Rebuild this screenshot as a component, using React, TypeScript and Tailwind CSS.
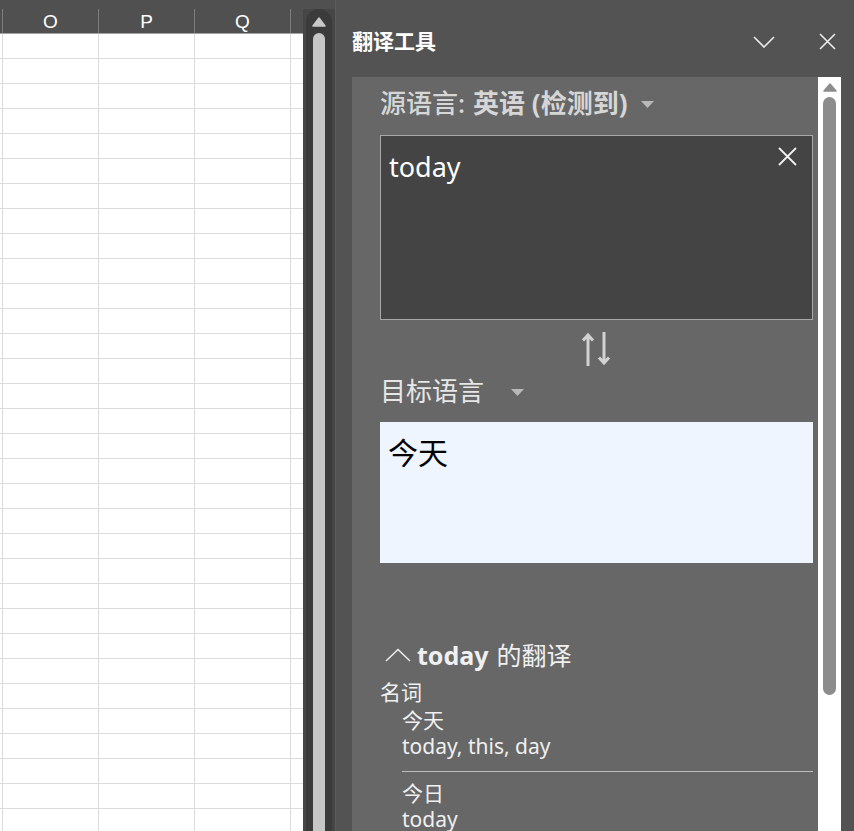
import React from 'react'

const ROWS = Array.from({ length: 32 })
const CJK = { fontFamily: '"Noto Sans", "Noto Sans CJK SC", sans-serif' }

function SheetGrid() {
  return (
    <div className="w-[303px] h-full flex flex-col bg-white overflow-hidden">
      <div className="h-[9px] bg-[#505050] shrink-0" />
      <div className="flex h-[25px] shrink-0 bg-[#505050] border-b border-[#a3a3a3] text-white text-[19px] leading-[25px]" style={{ fontFamily: '"Liberation Sans", Arial, sans-serif' }}>
        <div className="w-[3px] border-r border-[#7d7d7d]" />
        <div className="w-[96px] border-r border-[#7d7d7d] text-center">O</div>
        <div className="w-[96px] border-r border-[#7d7d7d] text-center">P</div>
        <div className="w-[96px] border-r border-[#7d7d7d] text-center">Q</div>
        <div className="flex-1" />
      </div>
      {ROWS.map((_, i) => (
        <div key={i} className="flex h-[25px] border-b border-[#dcdcdc] shrink-0">
          <div className="w-[3px] border-r border-[#dcdcdc]" />
          <div className="w-[96px] border-r border-[#dcdcdc]" />
          <div className="w-[96px] border-r border-[#dcdcdc]" />
          <div className="w-[96px] border-r border-[#dcdcdc]" />
          <div className="flex-1" />
        </div>
      ))}
    </div>
  )
}

function SheetScroll() {
  return (
    <div className="w-[32px] h-full bg-[#464646] flex pt-[9px] pl-[3px] pr-[3px]" style={{ backgroundImage: 'linear-gradient(#505050 0 9px, transparent 9px)' }}>
      <div className="w-[26px] h-full rounded-t-full bg-[#3b3b3b] flex flex-col items-center pt-[8px]">
        <svg width="14" height="10" viewBox="0 0 14 10">
          <path d="M7 1 L13 9 L1 9 Z" fill="#c8c8c8" stroke="#c8c8c8" strokeWidth="1.5" strokeLinejoin="round" />
        </svg>
        <div className="mt-[6px] w-[12px] flex-1 rounded-t-full bg-[#c6c6c6]" />
      </div>
    </div>
  )
}

function Caret({ color = '#b9b9b9' }: { color?: string }) {
  return (
    <svg width="13" height="7" viewBox="0 0 13 7">
      <path d="M0 0 L13 0 L6.5 7 Z" fill={color} />
    </svg>
  )
}

export default function App() {
  return (
    <div className="w-[854px] h-[831px] overflow-hidden flex bg-[#535353]" style={CJK}>
      <SheetGrid />
      <SheetScroll />

      {/* translator pane */}
      <div className="flex-1 h-full flex flex-col border-l border-[#5c5c5c] pl-[16px]">
        <div className="h-[77px] flex items-center pt-[6px] pr-[18px] shrink-0">
          <span className="text-[21px] font-bold text-white leading-none">翻译工具</span>
          <svg className="ml-auto" width="22" height="12" viewBox="0 0 22 12">
            <path d="M1 1 L11 11 L21 1" fill="none" stroke="#ececec" strokeWidth="1.6" />
          </svg>
          <svg className="ml-[44px]" width="17" height="17" viewBox="0 0 17 17">
            <path d="M1 1 L16 16 M16 1 L1 16" stroke="#ececec" strokeWidth="1.6" />
          </svg>
        </div>

        <div className="flex-1 flex min-h-0 pr-[13px]">
          <div className="flex-1 bg-[#676767] pl-[28px] pr-[5px] pt-[10px]">
            <div className="h-[32px] flex items-center text-[26px] leading-[32px] text-[#d6d6d6]">
              <span className="font-medium">源语言:</span>
              <span className="font-bold ml-[8px]">英语 (检测到)</span>
              <span className="ml-[14px] mt-[2px]"><Caret /></span>
            </div>

            <div className="mt-[16px] h-[185px] bg-[#444444] border border-[#a8a8a8] relative">
              <div className="pl-[8px] pt-[14px] text-[27px] leading-[34px] text-white">today</div>
              <svg className="absolute right-[15px] top-[11px]" width="19" height="19" viewBox="0 0 19 19">
                <path d="M1 1 L18 18 M18 1 L1 18" stroke="#f0f0f0" strokeWidth="1.8" />
              </svg>
            </div>

            <div className="h-[56px] flex justify-center items-center pt-[2px]">
              <svg width="30" height="34" viewBox="0 0 30 34">
                <path d="M6 34 V3 M1 8.5 L6 3 L11 8.5" fill="none" stroke="#d2d2d2" strokeWidth="3" />
                <path d="M22 0 V31 M17 25.5 L22 31 L27 25.5" fill="none" stroke="#d2d2d2" strokeWidth="3" />
              </svg>
            </div>

            <div className="h-[30px] flex items-center text-[26px] leading-[30px] text-[#e6e6e6]">
              <span>目标语言</span>
              <span className="ml-[27px] mt-[2px]"><Caret /></span>
            </div>

            <div className="mt-[16px] h-[141px] bg-[#eef5ff] pl-[8px] pt-[14px] text-[30px] leading-[34px] text-black">今天</div>

            <div className="mt-[75px] h-[34px] flex items-center text-[25px] leading-[34px] text-[#f0f0f0]">
              <svg className="ml-[5px] mr-[6px]" width="26" height="14" viewBox="0 0 26 14">
                <path d="M1 13 L13 1.5 L25 13" fill="none" stroke="#eeeeee" strokeWidth="1.5" />
              </svg>
              <span className="font-bold">today</span>
              <span className="ml-[8px]">的翻译</span>
            </div>

            <div className="mt-[7px] text-[21px] leading-[26px] text-[#f0f0f0]">名词</div>
            <div className="pl-[22px] text-[#f0f0f0]">
              <div className="mt-[2px] text-[21px] leading-[26px]">今天</div>
              <div className="text-[21px] leading-[26px]">today, this, day</div>
              <div className="mt-[12px] h-px bg-[#bdbdbd]" />
              <div className="mt-[8px] text-[21px] leading-[26px]">今日</div>
              <div className="text-[21px] leading-[26px]">today</div>
            </div>
          </div>

          <div className="w-[23px] bg-white flex flex-col items-center pt-[6px]">
            <svg width="14" height="9" viewBox="0 0 14 9">
              <path d="M7 1 L13 8 L1 8 Z" fill="#8c8c8c" stroke="#8c8c8c" strokeWidth="1.5" strokeLinejoin="round" />
            </svg>
            <div className="mt-[5px] w-[13px] h-[598px] rounded-full bg-[#8c8c8c]" />
          </div>
        </div>
      </div>
    </div>
  )
}
